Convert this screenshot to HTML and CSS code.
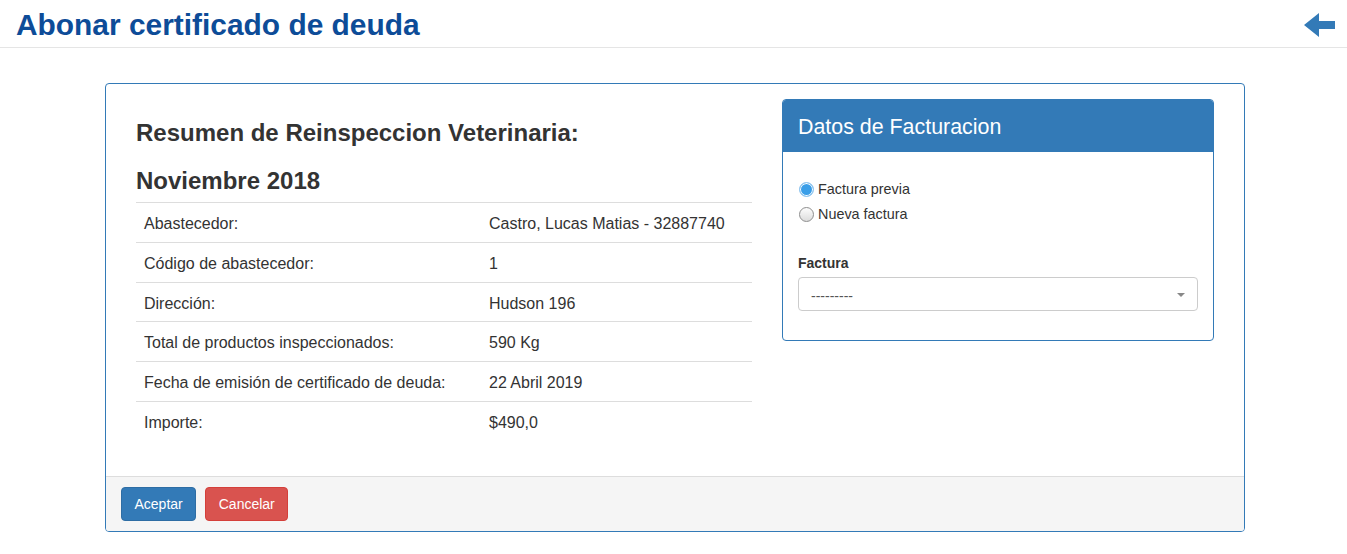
FILE: index.html
```html
<!DOCTYPE html>
<html lang="es">
<head>
<meta charset="utf-8">
<title>Abonar certificado de deuda</title>
<link rel="stylesheet" href="styles.css">
</head>
<body>
<header class="page-header">
  <h1 class="page-title">Abonar certificado de deuda</h1>
  <a class="back-link" href="#" aria-label="Volver">
    <svg width="31" height="24" viewBox="0 0 31 24"><polygon points="0,12 15,0 15,8 31,8 31,16 15,16 15,24" fill="#337ab7"/></svg>
  </a>
</header>

<main class="main-panel">
  <div class="main-body">
    <section class="summary">
      <h3 class="summary-title">Resumen de Reinspeccion Veterinaria:</h3>
      <h3 class="summary-title">Noviembre 2018</h3>
      <table class="summary-table">
        <colgroup><col class="col-k"><col></colgroup>
        <tr><td>Abastecedor:</td><td>Castro, Lucas Matias - 32887740</td></tr>
        <tr><td>Código de abastecedor:</td><td>1</td></tr>
        <tr><td>Dirección:</td><td>Hudson 196</td></tr>
        <tr><td>Total de productos inspeccionados:</td><td>590 Kg</td></tr>
        <tr><td>Fecha de emisión de certificado de deuda:</td><td>22 Abril 2019</td></tr>
        <tr><td>Importe:</td><td>$490,0</td></tr>
      </table>
    </section>

    <section class="billing">
      <div class="billing-heading">Datos de Facturacion</div>
      <div class="billing-body">
        <div class="radios">
          <label class="radio"><span class="radio-dot checked"></span>Factura previa</label>
          <label class="radio"><span class="radio-dot"></span>Nueva factura</label>
        </div>
        <div class="field-label">Factura</div>
        <div class="select">
          <span class="select-text">---------</span>
          <span class="caret"></span>
        </div>
      </div>
    </section>
  </div>
  <div class="main-footer">
    <button class="btn btn-primary">Aceptar</button>
    <button class="btn btn-danger">Cancelar</button>
  </div>
</main>
</body>
</html>
```

FILE: styles.css
```css
* { box-sizing: border-box; }

html, body {
  margin: 0;
  padding: 0;
  background: #fff;
}

body {
  font-family: "Liberation Sans", Arial, sans-serif;
  font-size: 14px;
  line-height: 20px;
  color: #333;
}

.page-header {
  display: flex;
  align-items: center;
  justify-content: space-between;
  height: 48px;
  padding: 0 12px 0 16px;
  border-bottom: 1px solid #e5e5e5;
}

.page-title {
  margin: 0;
  padding-top: 2px;
  font-size: 29.9px;
  line-height: 33px;
  font-weight: bold;
  color: #0d4c98;
}

.back-link {
  display: flex;
  margin-top: 2px;
  margin-right: 0;
}

.main-panel {
  width: 1140px;
  margin: 35px 0 0 105px;
  border: 1px solid #337ab7;
  border-radius: 4px;
  background: #fff;
}

.main-body {
  display: flex;
  gap: 30px;
  padding: 15px 29px 15px 30px;
}

.summary {
  width: 616px;
}

.summary-title {
  margin: 21px 0 0;
  font-size: 24px;
  line-height: 26.4px;
  font-weight: bold;
  color: #333;
}

.summary-title + .summary-title {
  margin: 22px 0 7px;
}

.summary-table {
  width: 616px;
  table-layout: fixed;
  border-collapse: collapse;
  margin-bottom: 20px;
  font-size: 16px;
  line-height: 22.86px;
}

.summary-table .col-k {
  width: 345px;
}

.summary-table td {
  padding: 10px 8px 6px;
  border-top: 1px solid #ddd;
  vertical-align: top;
}

.billing {
  width: 432px;
  align-self: flex-start;
  border: 1px solid #337ab7;
  border-radius: 4px;
}

.billing-heading {
  height: 52px;
  padding: 15px 15px 0;
  background: #337ab7;
  color: #fff;
  font-size: 21.4px;
  line-height: 24px;
  border-radius: 3px 3px 0 0;
}

.billing-body {
  padding: 15px 15px 14px;
}

.radios {
  display: flex;
  flex-direction: column;
  gap: 5px;
  margin-top: 12px;
}

.radio {
  display: flex;
  align-items: center;
  gap: 4px;
  height: 20px;
  padding-left: 1px;
  font-size: 14.4px;
}

.radio-dot {
  display: inline-block;
  width: 15px;
  height: 15px;
  border-radius: 50%;
  border: 1px solid #8e8e8e;
  background: linear-gradient(#fdfdfd, #dcdcdc);
}

.radio-dot.checked {
  border: 1px solid #95c7ef;
  background: #3a9ee8;
  box-shadow: inset 0 0 0 1px #fff;
}

.field-label {
  margin-top: 29px;
  margin-bottom: 4px;
  font-weight: bold;
  font-size: 14px;
  line-height: 20px;
}

.select {
  display: flex;
  align-items: center;
  justify-content: space-between;
  height: 34px;
  margin-bottom: 15px;
  padding: 4px 12px 0;
  border: 1px solid #ccc;
  border-radius: 4px;
  color: #555;
  font-size: 14px;
}

.caret {
  width: 0;
  height: 0;
  margin-top: -3px;
  border-left: 4px solid transparent;
  border-right: 4px solid transparent;
  border-top: 4px solid #888;
}

.main-footer {
  display: flex;
  gap: 9px;
  padding: 10px 15px;
  background: #f5f5f5;
  border-top: 1px solid #ddd;
  border-radius: 0 0 3px 3px;
}

.btn {
  height: 34px;
  padding: 6px 12.5px;
  font-family: "Liberation Sans", Arial, sans-serif;
  font-size: 14px;
  line-height: 20px;
  color: #fff;
  border-radius: 4px;
  border: 1px solid transparent;
  cursor: pointer;
}

.btn-primary {
  background: #337ab7;
  border-color: #2e6da4;
}

.btn-danger {
  background: #d9534f;
  border-color: #d43f3a;
}
```
